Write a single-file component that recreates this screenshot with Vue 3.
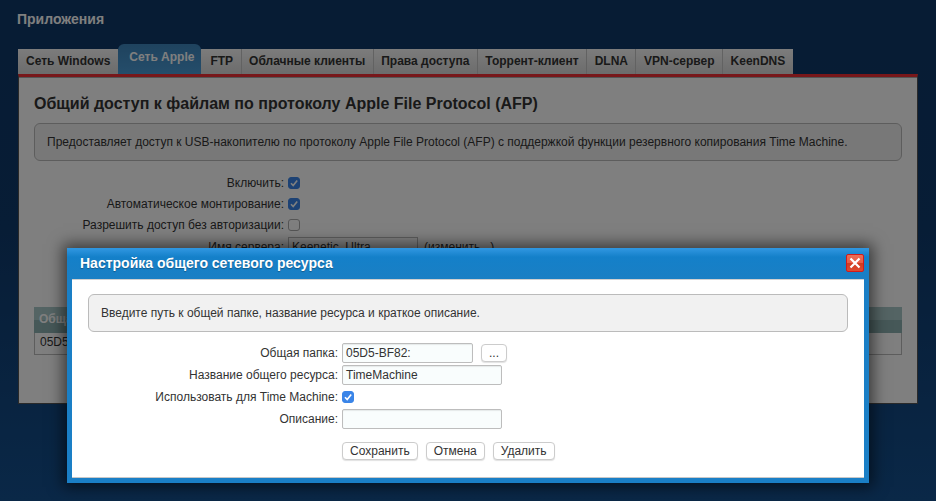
<script setup>
const tabs = ['Сеть Windows', 'Сеть Apple', 'FTP', 'Облачные клиенты', 'Права доступа', 'Торрент-клиент', 'DLNA', 'VPN-сервер', 'KeenDNS']
</script>

<template>
  <div class="page">
    <h2 class="apps">Приложения</h2>
    <div class="tabs">
      <div v-for="t in tabs" :key="t" class="tab" :class="{ active: t === 'Сеть Apple' }">{{ t }}</div>
    </div>
    <div class="panel">
      <h1>Общий доступ к файлам по протоколу Apple File Protocol (AFP)</h1>
      <div class="note">Предоставляет доступ к USB-накопителю по протоколу Apple File Protocol (AFP) с поддержкой функции резервного копирования Time Machine.</div>
      <div class="bgform">
        <div class="row"><label>Включить:</label><span class="cb on"><svg viewBox="0 0 12 12"><path d="M3 6.2 5.2 8.6 9.2 3.4" /></svg></span></div>
        <div class="row"><label>Автоматическое монтирование:</label><span class="cb on"><svg viewBox="0 0 12 12"><path d="M3 6.2 5.2 8.6 9.2 3.4" /></svg></span></div>
        <div class="row"><label>Разрешить доступ без авторизации:</label><span class="cb"></span></div>
        <div class="row server"><label>Имя сервера:</label><span class="srv">Keenetic_Ultra</span><span class="chg">(изменить...)</span></div>
      </div>
      <div class="table">
        <div class="thead">Общая папка</div>
        <div class="tbody">05D5-BF82:</div>
      </div>
    </div>

    <div class="overlay"></div>

    <div class="modal">
      <div class="mhead">
        <span>Настройка общего сетевого ресурса</span>
        <span class="close"><svg viewBox="0 0 16 16"><path d="M3.5 3.5 12.5 12.5M12.5 3.5 3.5 12.5" /></svg></span>
      </div>
      <div class="mbody">
        <div class="mnote">Введите путь к общей папке, название ресурса и краткое описание.</div>
        <div class="mform">
          <label>Общая папка:</label>
          <div class="ctl"><span class="inp short">05D5-BF82:</span><span class="btn dots">...</span></div>
          <label>Название общего ресурса:</label>
          <div class="ctl"><span class="inp">TimeMachine</span></div>
          <label>Использовать для Time Machine:</label>
          <div class="ctl"><span class="cb blue"><svg viewBox="0 0 12 12"><path d="M3 6.2 5.2 8.6 9.2 3.4" /></svg></span></div>
          <label>Описание:</label>
          <div class="ctl"><span class="inp"></span></div>
        </div>
        <div class="actions">
          <span class="btn">Сохранить</span>
          <span class="btn">Отмена</span>
          <span class="btn">Удалить</span>
        </div>
      </div>
    </div>
  </div>
</template>

<style>
html, body { margin: 0; background: #0a2c52; }
</style>

<style scoped>
.page {
  position: relative;
  width: 936px;
  height: 501px;
  overflow: hidden;
  box-sizing: border-box;
  padding: 11px 18px 0;
  font-family: "Liberation Sans", Arial, sans-serif;
  font-size: 12px;
  color: #333;
  background: linear-gradient(180deg, #0e3868 0%, #0f3a6c 45%, #14508f 100%);
}
.apps {
  margin: 0 0 17px -1px;
  height: 16px;
  line-height: 16px;
  font-size: 14px;
  font-weight: bold;
  color: #fff;
}
.tabs {
  display: flex;
  align-items: flex-end;
  height: 30px;
  width: fit-content;
}
.tab {
  height: 25px;
  line-height: 24px;
  box-sizing: border-box;
  padding: 0 7.5px;
  font-weight: bold;
  color: #333;
  background: linear-gradient(180deg, #f8f8f8, #d8d8d8);
  border-left: 1px solid #c4c4c4;
}
.tab:first-child { border-left: none; padding: 0 8px; }
.tab.active {
  height: 30px;
  line-height: 26px;
  padding: 0 7px 0 11px;
  border: none;
  border-radius: 6px 6px 0 0;
  color: #fff;
  background: linear-gradient(180deg, #3e86bd, #4a9bd6);
}
.tab.active + .tab { border-left: none; padding-left: 9px; }
.panel {
  box-sizing: border-box;
  width: 900px;
  height: 330px;
  padding: 17px 15px 0;
  background: #fff;
  border-top: 3px solid #f02f35;
  border-right: 1px solid #555;
  border-left: 1px solid #555;
  border-bottom: 1px solid #555;
  box-shadow: inset 0 1px 0 #aaa;
}
.panel h1 {
  margin: 0 0 9px;
  height: 20px;
  line-height: 20px;
  font-size: 16px;
  font-weight: bold;
  color: #333;
}
.note, .mnote {
  box-sizing: border-box;
  height: 38px;
  line-height: 36px;
  padding: 0 12px;
  background: #f1f1f1;
  border: 1px solid #bbb;
  border-radius: 6px;
}
.note { width: 868px; }
.bgform { margin-top: 11px; }
.row {
  display: flex;
  align-items: center;
  height: 21.3px;
}
.row label {
  width: 250px;
  margin-right: 4px;
  text-align: right;
}
.cb {
  display: inline-block;
  box-sizing: border-box;
  width: 12px;
  height: 12px;
  border: 1px solid #aaa;
  border-radius: 3px;
  background: #fff;
}
.cb svg { display: block; width: 12px; height: 12px; margin: -1px; }
.cb path { fill: none; stroke: #fff; stroke-width: 1.6; }
.cb.on, .cb.blue { background: #3a85e8; border-color: #3a85e8; }
.srv {
  box-sizing: border-box;
  width: 130px;
  height: 20px;
  line-height: 18px;
  padding-left: 3px;
  border: 1px solid #bbb;
  background: #fff;
}
.chg { margin-left: 6px; }
.table {
  margin-top: 50px;
  width: 868px;
}
.thead {
  box-sizing: border-box;
  height: 26px;
  line-height: 25px;
  padding-left: 5px;
  font-weight: bold;
  color: #fff;
  background: linear-gradient(180deg, #a8c8c8 0%, #a8c8c8 50%, #8cb0b0 50%, #8cb0b0 100%);
}
.tbody {
  box-sizing: border-box;
  height: 22px;
  line-height: 19px;
  padding-left: 5px;
  border: 1px solid #bbb;
  border-top: none;
}
.overlay {
  position: absolute;
  inset: 0;
  background: rgba(0, 0, 0, 0.5);
}
.modal {
  position: absolute;
  left: 67px;
  top: 248px;
  box-sizing: border-box;
  width: 802px;
  height: 235px;
  display: flex;
  flex-direction: column;
  padding: 0 5px 5px;
  background: #1a7fc6;
  border-top: 1px solid #2e95df;
  box-shadow: 0 0 14px 4px rgba(0, 0, 0, 0.55);
}
.mhead {
  display: flex;
  align-items: center;
  justify-content: space-between;
  height: 30px;
  padding: 0 5px 2px 13px;
  margin: 0 -5px;
  font-size: 14px;
  font-weight: bold;
  color: #fff;
  text-shadow: 0 1px 1px rgba(0, 0, 0, .3);
  background: linear-gradient(180deg, #2e95df 0, #1480c9 8px, #1a7fc4 100%);
  box-sizing: border-box;
}
.close {
  box-sizing: border-box;
  width: 18px;
  height: 18px;
  border: 1px solid #d21a1a;
  border-radius: 2px;
  background: linear-gradient(180deg, #ec6e55 0, #e85a45 50%, #d03a20 50%, #df4a30 100%);
}
.close svg { display: block; width: 16px; height: 16px; }
.close path { fill: none; stroke: #fff; stroke-width: 2.2; }
.mbody {
  flex: 1;
  box-sizing: border-box;
  background: #fff;
  border-top: 1px solid #d0d0d0;
  border-bottom: 1px solid #c8c8c8;
  padding: 14px 16px 0;
}
.mnote { width: 760px; color: #333; }
.mform {
  display: grid;
  grid-template-columns: 250px 1fr;
  grid-auto-rows: 22px;
  column-gap: 4px;
  margin-top: 10px;
  margin-bottom: 12px;
  align-items: center;
  color: #333;
}
.mform label { text-align: right; }
.ctl { display: flex; align-items: center; }
.inp {
  box-sizing: border-box;
  width: 160px;
  height: 20px;
  line-height: 18px;
  padding-left: 3px;
  border: 1px solid #bdbdbd;
  border-radius: 2px;
  background: #f9fdfd;
  box-shadow: inset 0 1px 1px rgba(0,0,0,.08);
}
.inp.short { width: 131px; }
.btn {
  display: inline-block;
  box-sizing: border-box;
  height: 18px;
  line-height: 16px;
  padding: 0 7px;
  border: 1px solid #ccc;
  border-radius: 4px;
  background: #fff;
  color: #333;
  box-shadow: 0 1px 1px rgba(0,0,0,.12);
}
.dots { width: 26px; margin-left: 8px; text-align: center; padding: 0; }
.actions {
  display: flex;
  gap: 8px;
  margin-left: 254px;
}
</style>
